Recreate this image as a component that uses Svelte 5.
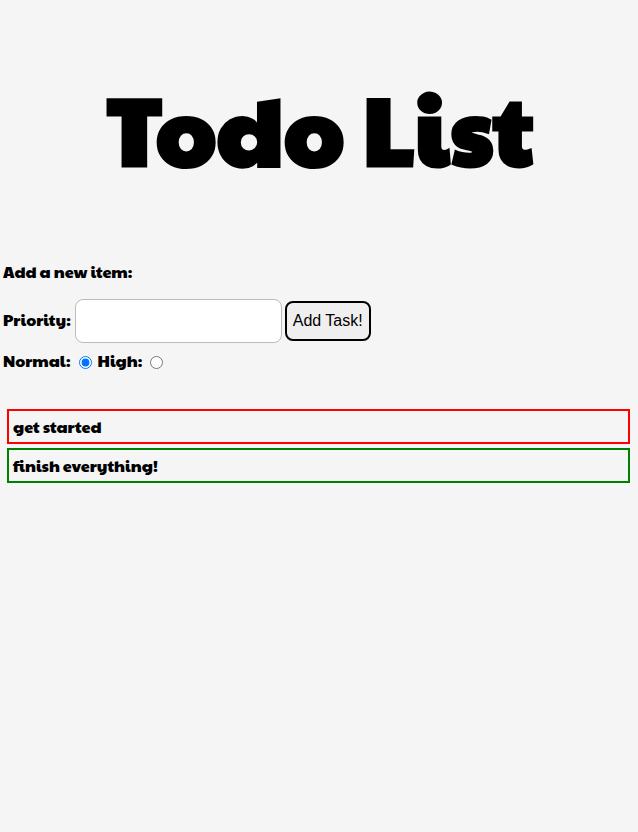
<script>
  let tasks = $state([
    { text: 'get started', priority: 'high' },
    { text: 'finish everything!', priority: 'normal' }
  ]);
  let text = $state('');
  let priority = $state('normal');

  function addTask(event) {
    event.preventDefault();
    if (!text.trim()) return;
    tasks.push({ text, priority });
    text = '';
  }
</script>

<main>
  <h1>Todo List</h1>
  <form onsubmit={addTask}>
    <label class="intro" for="task">Add a new item:</label>
    <div class="entry">
      <label for="task">Priority:</label>
      <input id="task" class="task" type="text" bind:value={text} />
      <button type="submit">Add Task!</button>
    </div>
    <div class="choices">
      <label for="normal">Normal:</label>
      <input id="normal" type="radio" name="priority" value="normal" bind:group={priority} />
      <label for="high">High:</label>
      <input id="high" type="radio" name="priority" value="high" bind:group={priority} />
    </div>
  </form>
  <ul>
    {#each tasks as task}
      <li class={task.priority}>{task.text}</li>
    {/each}
  </ul>
</main>

<style>
  :global(body) {
    background: #f5f5f5;
  }
  main {
    padding-left: 3px;
    color: #000;
    font: 400 16px/20px "Paytone One", Lato, sans-serif;
  }
  h1 {
    margin: 0;
    padding: 62px 0 0;
    text-align: center;
    font-size: 97px;
    font-weight: 700;
    line-height: 128px;
  }
  form {
    padding-top: 72px;
  }
  .intro {
    display: block;
  }
  .entry {
    margin: 17px 0 8px;
  }
  .task {
    box-sizing: border-box;
    width: 207px;
    height: 44px;
    margin: 0 0 0 1px;
    padding: 8px;
    border: 1px solid #bbb;
    border-radius: 8px;
    background: #fff;
    font: 16px "Liberation Sans", sans-serif;
  }
  button {
    height: 40px;
    padding: 0 6px;
    border: 2px solid #000;
    border-radius: 8px;
    background: #efefef;
    color: #000;
    font: 16px "Liberation Sans", sans-serif;
  }
  input[type="radio"] {
    width: 13px;
    height: 13px;
    margin: 0 3px 0 5px;
    vertical-align: -2px;
  }
  ul {
    margin: 38px 8px 0 4px;
    padding: 0;
    list-style: none;
  }
  li {
    margin-bottom: 4px;
    padding: 6px 4px 5px;
    border: 2px solid red;
  }
  .normal {
    border-color: green;
  }
</style>
